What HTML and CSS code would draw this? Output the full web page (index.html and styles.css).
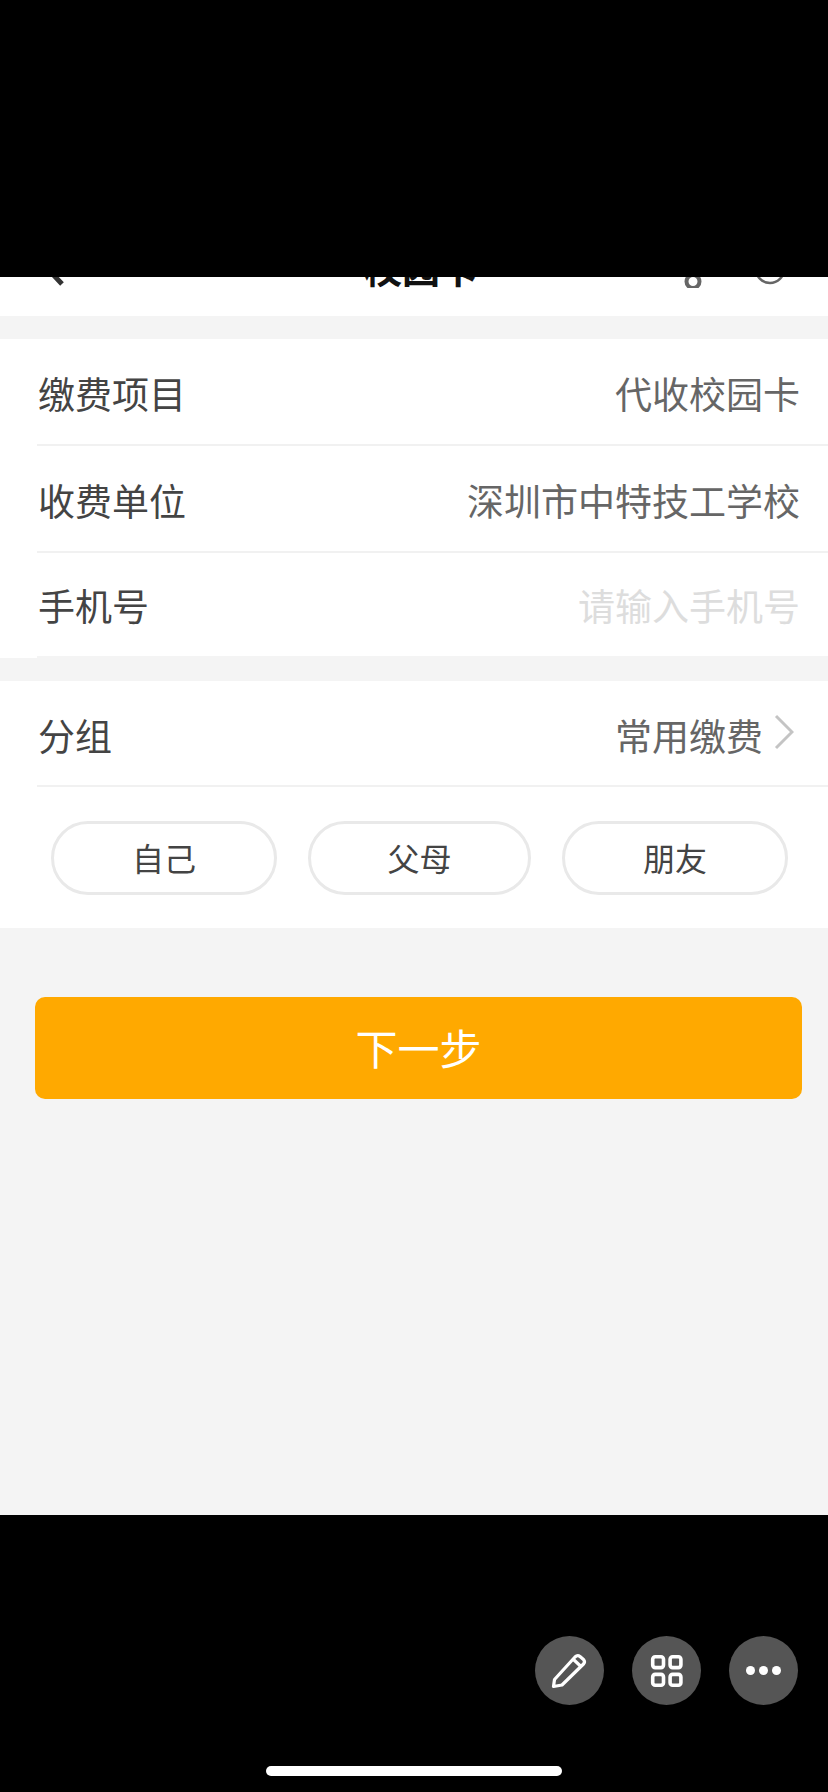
FILE: index.html
```html
<!DOCTYPE html>
<html lang="zh-CN">
<head>
  <meta charset="UTF-8">
  <title>校园卡</title>
  <link rel="stylesheet" href="styles.css">
</head>
<body>
  <div class="top-cover"></div>

  <div class="page">
    <div class="nav">
      <div class="nav-inner">
        <svg class="nav-back" width="24" height="40" viewBox="0 0 24 40">
          <path d="M21 3 L5 20 L21 37" fill="none" stroke="#333" stroke-width="5"/>
        </svg>
        <div class="nav-title">校园卡</div>
        <svg class="nav-share" width="24" height="40" viewBox="0 0 24 40">
          <circle cx="12" cy="33.5" r="6.5" fill="none" stroke="#666" stroke-width="4"/>
          <circle cx="12" cy="20" r="5" fill="none" stroke="#666" stroke-width="3.5"/>
        </svg>
        <svg class="nav-help" width="32" height="32" viewBox="0 0 32 32">
          <circle cx="16" cy="16" r="14" fill="none" stroke="#666" stroke-width="2.5"/>
        </svg>
      </div>
    </div>

    <div class="group group-info">
      <div class="row">
        <span class="row-label">缴费项目</span>
        <span class="row-value">代收校园卡</span>
      </div>
      <div class="row">
        <span class="row-label">收费单位</span>
        <span class="row-value">深圳市中特技工学校</span>
      </div>
      <div class="row row-last">
        <span class="row-label">手机号</span>
        <span class="row-value placeholder">请输入手机号</span>
      </div>
    </div>

    <div class="group group-tags">
      <div class="row">
        <span class="row-label">分组</span>
        <span class="row-value">常用缴费
          <svg class="row-arrow" width="20" height="36" viewBox="0 0 20 36">
            <path d="M2 2 L18 18 L2 34" fill="none" stroke="#c4c4c4" stroke-width="3"/>
          </svg>
        </span>
      </div>
      <div class="tags">
        <button class="tag">自己</button>
        <button class="tag">父母</button>
        <button class="tag">朋友</button>
      </div>
    </div>

    <button class="next-btn">下一步</button>
  </div>

  <div class="bottom-cover">
    <div class="fab-row">
      <div class="fab">
        <svg width="69" height="69" viewBox="0 0 69 69">
          <path d="M18.5 50.5 L19.5 43.5 L40 21 Q42.5 18.5 45 20.5 L48.5 23.5 Q50.5 26 48.5 28 L27 49 Z M38.5 23.5 L46.5 31" fill="none" stroke="#fff" stroke-width="3.2" stroke-linejoin="round"/>
        </svg>
      </div>
      <div class="fab">
        <svg width="69" height="69" viewBox="0 0 69 69">
          <rect x="20.7" y="20.8" width="10.8" height="10.8" rx="2.5" fill="none" stroke="#fff" stroke-width="3.6"/>
          <rect x="38.1" y="20.8" width="10.8" height="10.8" rx="2.5" fill="none" stroke="#fff" stroke-width="3.6"/>
          <rect x="20.7" y="38.4" width="10.8" height="10.8" rx="2.5" fill="none" stroke="#fff" stroke-width="3.6"/>
          <rect x="38.1" y="38.4" width="10.8" height="10.8" rx="2.5" fill="none" stroke="#fff" stroke-width="3.6"/>
        </svg>
      </div>
      <div class="fab">
        <svg width="69" height="69" viewBox="0 0 69 69">
          <circle cx="21.5" cy="34.5" r="4.5" fill="#fff"/>
          <circle cx="34.5" cy="34.5" r="4.5" fill="#fff"/>
          <circle cx="47.5" cy="34.5" r="4.5" fill="#fff"/>
        </svg>
      </div>
    </div>
    <div class="home-bar"></div>
  </div>
</body>
</html>
```

FILE: styles.css
```css
* {
  box-sizing: border-box;
}
html, body {
  margin: 0;
  padding: 0;
}
body {
  width: 828px;
  height: 1792px;
  overflow: hidden;
  display: flex;
  flex-direction: column;
  background: #000;
  font-family: "Noto Sans CJK SC", "Noto Sans", sans-serif;
}
.top-cover {
  height: 277px;
  background: #000;
}
.page {
  height: 1238px;
  background: #f4f4f4;
  display: flex;
  flex-direction: column;
}

/* header, top part is hidden by the black cover */
.nav {
  height: 39px;
  background: #fff;
  overflow: hidden;
}
.nav-inner {
  height: 88px;
  margin-top: -49px;
  display: flex;
  align-items: center;
  justify-content: center;
  position: relative;
}
.nav-title {
  font-size: 38px;
  font-weight: bold;
  color: #111;
  margin-left: 14px;
  margin-bottom: 12px;
}
.nav-back {
  position: absolute;
  left: 41px;
  top: 19px;
}
.nav-share {
  position: absolute;
  left: 681px;
  top: 20px;
}
.nav-help {
  position: absolute;
  left: 754px;
  top: 25px;
}

.group {
  background: #fff;
  margin-top: 23px;
}
.group-info {
  height: 319px;
}
.row {
  margin-left: 37px;
  padding: 2px 28px 0 1px;
  height: 107px;
  border-bottom: 2px solid #f1f1f1;
  display: flex;
  align-items: center;
  justify-content: space-between;
}
.row-last {
  height: 105px;
  padding-top: 0;
  border-bottom-color: #f4f4f4;
}
.row-label {
  font-size: 37px;
  color: #444;
}
.row-value {
  font-size: 37px;
  color: #666;
  display: flex;
  align-items: center;
}
.placeholder {
  color: #ddd;
}
.row-arrow {
  margin-left: 11px;
  margin-right: 2px;
  margin-bottom: 6px;
}
.group-tags {
  height: 247px;
}
.group-tags .row {
  height: 106px;
  padding-top: 4px;
  padding-right: 32px;
}

.tags {
  display: grid;
  grid-template-columns: 226px 223px 226px;
  gap: 31px;
  padding: 34px 0 0 51px;
}
.tag {
  height: 74px;
  background: #fff;
  border: 3px solid #e9e9e9;
  border-radius: 37px;
  font-family: inherit;
  font-size: 32px;
  color: #444;
  padding: 0 0 3px;
}

.next-btn {
  margin: 69px 26px 0 35px;
  height: 102px;
  border: none;
  border-radius: 10px;
  background: #ffa900;
  color: #fff;
  font-family: inherit;
  font-size: 42px;
  padding: 0 0 4px;
}

.bottom-cover {
  flex: 1;
  background: #000;
}
.fab-row {
  display: flex;
  justify-content: flex-end;
  gap: 28px;
  padding: 121px 30px 0 0;
}
.fab {
  width: 69px;
  height: 69px;
  border-radius: 50%;
  background: #555;
}
.fab svg {
  display: block;
}
.home-bar {
  width: 296px;
  height: 10px;
  border-radius: 5px;
  background: #fff;
  margin: 61px auto 0;
}
```
